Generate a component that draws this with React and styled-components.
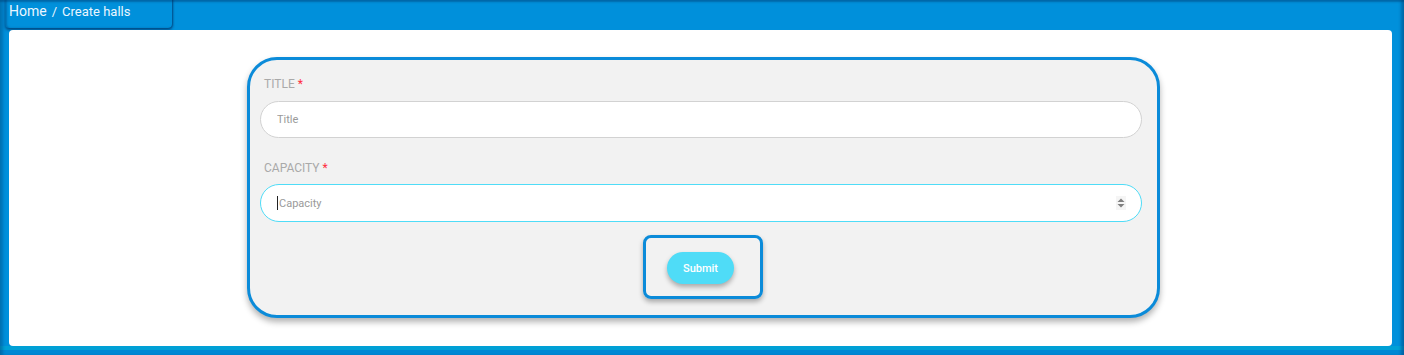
import React from "react";
import styled, { createGlobalStyle } from "styled-components";

const GlobalStyle = createGlobalStyle`
  html, body { margin: 0; padding: 0; }
  body { font-family: Roboto, "Liberation Sans", Arial, sans-serif; background: #0090db; }
  * { box-sizing: border-box; }
`;

const Frame = styled.div`
  width: 1404px;
  height: 355px;
  background: #0090db;
  display: flex;
  flex-direction: column;
  box-shadow: inset 0 3px 2px -1px rgba(0, 60, 110, 0.45),
    inset 4px 0 3px -1px rgba(0, 60, 110, 0.35),
    inset -8px 0 3px -5px rgba(0, 60, 110, 0.45),
    inset 0 -5px 0 0 #0088d4,
    inset 0 -9px 0 0 #00a0d6;
  overflow: hidden;
`;

const Crumbs = styled.nav`
  align-self: flex-start;
  margin-left: 5px;
  height: 31px;
  width: 167px;
  margin-top: -3px;
  margin-bottom: 2px;
  padding: 6px 0 0 4px;
  border-radius: 0 0 4px 4px;
  box-shadow: inset 2px 0 2px rgba(0, 50, 100, 0.35),
    0 2px 3px rgba(0, 40, 90, 0.6),
    1px 0 2px rgba(0, 40, 90, 0.5);
  display: flex;
  align-items: baseline;
  gap: 5px;
  color: #eaf6ff;
  font-family: Roboto, "Liberation Sans", Arial, sans-serif;
  white-space: nowrap;
`;

const Crumb = styled.span`
  font-size: ${(p) => (p.$big ? "14px" : "13px")};
`;

const Sheet = styled.main`
  flex: 1;
  margin: 0 12px 9px 9px;
  background: #ffffff;
  border-radius: 4px;
  padding-top: 27px;
`;

const FormCard = styled.form`
  width: 913px;
  margin-left: 238px;
  height: 261px;
  background: #f2f2f2;
  border: 3px solid #0b8bd9;
  border-radius: 30px;
  box-shadow: 0 4px 6px rgba(0, 0, 0, 0.3);
  padding: 17px 15px 0 10px;
  display: flex;
  flex-direction: column;
`;

const Label = styled.label`
  margin-left: 4px;
  font-size: 12px;
  line-height: 14px;
  color: #a9a9a9;
  text-transform: uppercase;
  margin-bottom: ${(p) => p.$mb}px;
  margin-top: ${(p) => p.$mt || 0}px;
`;

const Star = styled.span`
  color: #ff2d3f;
  margin-left: 3px;
`;

const Field = styled.div`
  height: ${(p) => p.$h}px;
  background: #ffffff;
  border: 1px solid ${(p) => (p.$focus ? "#4fdcf7" : "#d2d2d2")};
  border-radius: 20px;
  display: flex;
  align-items: center;
  padding: 0 16px 0 16px;
`;

const Caret = styled.span`
  width: 1px;
  height: 14px;
  background: #222;
  flex: none;
`;

const Input = styled.input`
  flex: 1;
  border: none;
  outline: none;
  background: transparent;
  font-family: Roboto, "Liberation Sans", Arial, sans-serif;
  font-size: 11px;
  color: #333;
  padding: 0 0 0 ${(p) => p.$pl || 0}px;
  &::placeholder { color: #9a9a9a; }
`;

const Spinner = styled.span`
  flex: none;
  width: 10px;
  height: 14px;
  display: flex;
  align-items: center;
  justify-content: center;
  background: #f5f5f5;
  margin-right: -1px;
`;

const ButtonBox = styled.div`
  align-self: center;
  margin-top: 13px;
  margin-left: 4px;
  width: 120px;
  height: 64px;
  border: 3px solid #0b8bd9;
  border-radius: 8px;
  box-shadow: 0 3px 5px rgba(0, 0, 0, 0.3);
  display: flex;
  align-items: center;
  justify-content: center;
  padding: 0 5px 0 0;
`;

const Submit = styled.button`
  width: 67px;
  height: 32px;
  border: none;
  border-radius: 16px;
  background: #4fdcf7;
  color: #ffffff;
  font-family: Roboto, "Liberation Sans", Arial, sans-serif;
  font-size: 11px;
  font-weight: 500;
  box-shadow: 0 3px 5px rgba(0, 0, 0, 0.3);
  cursor: pointer;
  margin-top: 2px;
`;

export default function App() {
  return (
    <>
      <GlobalStyle />
      <Frame>
        <Crumbs>
          <Crumb $big>Home</Crumb>
          <Crumb>/</Crumb>
          <Crumb>Create halls</Crumb>
        </Crumbs>
        <Sheet>
          <FormCard onSubmit={(e) => e.preventDefault()}>
            <Label $mb={10}>
              Title<Star>*</Star>
            </Label>
            <Field $h={37}>
              <Input placeholder="Title" />
            </Field>
            <Label $mt={23} $mb={9}>
              Capacity<Star>*</Star>
            </Label>
            <Field $h={38} $focus>
              <Caret />
              <Input placeholder="Capacity" $pl={1} />
              <Spinner>
                <svg width="8" height="10" viewBox="0 0 8 10">
                  <path d="M4 0.5 L7.5 4 H0.5 Z" fill="#808080" />
                  <path d="M4 9.5 L7.5 6 H0.5 Z" fill="#808080" />
                </svg>
              </Spinner>
            </Field>
            <ButtonBox>
              <Submit type="submit">Submit</Submit>
            </ButtonBox>
          </FormCard>
        </Sheet>
      </Frame>
    </>
  );
}
